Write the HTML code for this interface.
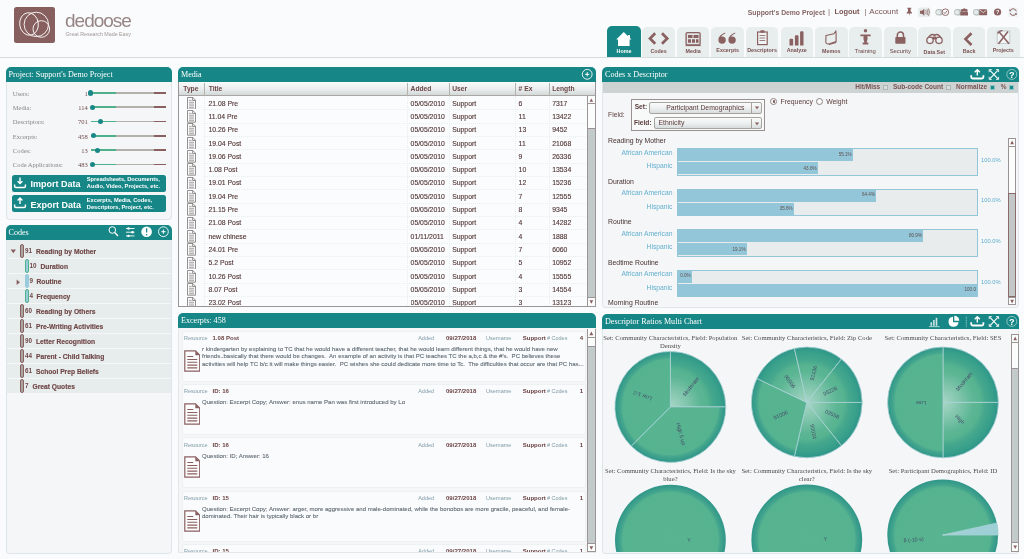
<!DOCTYPE html>
<html lang="en">
<head>
<meta charset="utf-8">
<title>Dedoose</title>
<style>
*{box-sizing:border-box;margin:0;padding:0}
html,body{width:1024px;height:559px;overflow:hidden}
body{background:#fafbfc;font-family:"Liberation Sans",sans-serif;position:relative;color:#6b4444}
.abs,.abs-all>*{position:absolute}
.serif{font-family:"Liberation Serif",serif}
.nw{white-space:nowrap}
/* header */
#logo{left:14px;top:7px;width:41px;height:36px;background:#885f5f;border-radius:2.5px}
#brand{left:65px;top:9.5px;font-size:19px;letter-spacing:-1px;color:#978585;line-height:22px;white-space:nowrap}
#tag{left:65.5px;top:30.5px;font-size:5.3px;color:#a39595;line-height:7px;white-space:nowrap}
#hline{left:0;top:56.5px;width:1024px;height:1px;background:#d6dbdb}
.toptxt{top:6px;line-height:12px;white-space:nowrap;color:#7a5454}
/* tabs */
.tab{top:27px;width:32.5px;height:30px;background:#e8eded;border-radius:5px 5px 0 0}
.tab.on{top:26px;height:31px;width:34px;background:#178686}
.tab span{position:absolute;left:-10px;right:-10px;top:19.9px;text-align:center;font-size:5.35px;font-weight:bold;color:#7a5252;line-height:8px;white-space:nowrap}
.tab.on span{color:#fff;top:21.1px}
.tab svg{position:absolute;left:0;top:0}
/* panels */
.ph{height:15px;background:#178686;border-radius:5px 5px 0 0;color:#fff;font-family:"Liberation Serif",serif;font-size:8.100px;line-height:15px;padding-left:3px;white-space:nowrap}
.pb{background:#f4f6f7;border:1px solid #dfe6e8;border-top:0;border-radius:0 0 4px 4px}
</style>
</head>
<body>
<div id="root" style="position:absolute;left:0;top:0;width:1024px;height:559px;will-change:transform">
<!-- ===== HEADER ===== -->
<div id="logo" class="abs">
<svg width="41" height="36" viewBox="0 0 41 36"><g fill="none" stroke="#fff" stroke-width="0.9"><ellipse cx="15" cy="17" rx="9.3" ry="11.3" transform="rotate(-8 15 17)"/><circle cx="22.3" cy="17.4" r="12.2"/><circle cx="27.3" cy="22" r="8.3"/></g></svg>
</div>
<div id="brand" class="abs">dedoose</div>
<div id="tag" class="abs">Great Research Made Easy</div>
<div id="hline" class="abs"></div>
<!-- ===== TOP RIGHT ===== -->
<div class="abs toptxt" style="left:747.8px;font-size:6.8px;font-weight:bold;top:6.5px;color:#856565">Support's Demo Project</div>
<div class="abs toptxt" style="left:828px;font-size:8px;top:5.5px;color:#8a6a6a">|</div>
<div class="abs toptxt" style="left:834.5px;font-size:7.4px;font-weight:bold;top:5.5px">Logout</div>
<div class="abs toptxt" style="left:864.5px;font-size:8px;top:5.5px;color:#8a6a6a">|</div>
<div class="abs toptxt" style="left:869.3px;font-size:8px;top:5.5px;color:#7a5555">Account</div>
<svg class="abs" style="left:900px;top:4px" width="124" height="16" viewBox="900 4 124 16">
 <g fill="#8a6060" stroke="none">
  <!-- pin -->
  <path d="M907.3 7.8h4v1h-.7v2.4l1.4 1.5v.8h-2.4l-.3 3-.3-3h-2.4v-.8l1.4-1.5V8.800h-.7z"/>
  <!-- speaker -->
  <rect x="918.2" y="7.5" width="12.2" height="9.5" rx="1.5" fill="#e6ecec"/>
  <path d="M920 10.700h2l2.300-2v7l-2.300-2h-2z"/>
  <path d="M925.600 10.200q1.200 2 0 4M927 9.300q1.800 2.900 0 5.800M928.400 8.600q2.200 3.600 0 7.200" fill="none" stroke="#8a6060" stroke-width=".7"/>
  <!-- toggle+check -->
  <rect x="935.400" y="9" width="8" height="6.400" rx="3.200" fill="#b9c0c0"/><circle cx="938.500" cy="12.200" r="2.300" fill="#e3e8e8"/>
  <circle cx="945.400" cy="12.200" r="3.300" fill="#fafbfc" stroke="#8a6060" stroke-width=".9"/><path d="M943.800 12.200l1.200 1.300 2.200-2.700" fill="none" stroke="#8a6060" stroke-width=".9"/>
  <!-- toggle+group -->
  <rect x="954" y="9" width="8" height="6.400" rx="3.200" fill="#b9c0c0"/><circle cx="957.100" cy="12.200" r="2.300" fill="#e3e8e8"/>
  <path d="M960.300 15.400v-2.600q0-1.400 1.400-1.400h4.800q1.500 0 1.500 1.400v2.600z"/><circle cx="962.300" cy="10.400" r="1.300"/><circle cx="964.300" cy="9.700" r="1.500"/><circle cx="966.300" cy="10.400" r="1.300"/>
  <!-- toggle+mail -->
  <rect x="973" y="9" width="8" height="6.400" rx="3.200" fill="#b9c0c0"/><circle cx="976.100" cy="12.200" r="2.300" fill="#e3e8e8"/>
  <rect x="979.300" y="9.300" width="7.800" height="6" rx=".6"/><path d="M979.800 9.900l3.400 2.800 3.400-2.800" fill="none" stroke="#f4f6f6" stroke-width=".7"/>
  <!-- help -->
  <circle cx="997.600" cy="12" r="3.600"/>
  <!-- refresh -->
  <rect x="1008.500" y="7.500" width="9.500" height="9.500" rx="1.500" fill="#eef2f2"/>
  <path d="M1016.300 11.300a3.300 3.300 0 0 0-6.100-.8M1010 12.900a3.300 3.300 0 0 0 6.100.8" fill="none" stroke="#8a6060" stroke-width="1"/>
  <path d="M1009.300 9.300l.3 2.100 2-.5zM1016.900 15l-.3-2.100-2 .5z"/>
 </g>
 <text x="997.600" y="14" font-size="5.500" font-weight="bold" text-anchor="middle" fill="#fafbfc" font-family="Liberation Sans, sans-serif">?</text>
</svg>
<!-- ===== NAV TABS ===== -->
<div class="abs tab on" style="left:607px"><svg width="34" height="31" viewBox="0 0 34 31"><path d="M16.800 6L9.200 13.400h1.800V20h11.600v-6.600h1.800L23 12V9h-2v1.200z" fill="#fff"/></svg><span>Home</span></div>
<div class="abs tab" style="left:642.3px"><svg width="33" height="30" viewBox="0 0 33 30"><path d="M13.200 6.300L8 11.500l5.200 5.200M20 6.300l5.200 5.200-5.200 5.200" fill="none" stroke="#8a6060" stroke-width="2.700"/></svg><span>Codes</span></div>
<div class="abs tab" style="left:676.900px"><svg width="33" height="30" viewBox="0 0 33 30"><rect x="9.100" y="5.600" width="14" height="12.400" rx="1.200" fill="#dfe5e5" stroke="#8a6060" stroke-width="1.300"/><path d="M11 8h4.500v3H11zM16.500 8H21.500v3H16.500zM11 12.300h3v3.500h-3zM15 12.300h3v3.500h-3zM19 12.300h2.500v3.500H19z" fill="#8a6060"/><path d="M8.500 18.600h15.200" stroke="#8a6060" stroke-width="1"/></svg><span>Media</span></div>
<div class="abs tab" style="left:711.400px"><svg width="33" height="30" viewBox="0 0 33 30"><path d="M14.200 5.500q-6.800 2.600-6.800 7.600a3.700 3.700 0 1 0 3.700-3.700q-.6 0-1.100.2q1-2 4.200-3.200zM24.200 5.500q-6.800 2.600-6.800 7.600a3.700 3.700 0 1 0 3.700-3.700q-.6 0-1.100.2q1-2 4.200-3.200z" fill="#8a6060"/></svg><span style="top:18.9px">Excerpts</span></div>
<div class="abs tab" style="left:745.800px"><svg width="33" height="30" viewBox="0 0 33 30"><rect x="11.600" y="5" width="9.600" height="12.600" fill="#f1f4f4" stroke="#8a6060" stroke-width="1.200"/><rect x="14.300" y="3.200" width="4.200" height="2.600" rx=".8" fill="#8a6060"/><path d="M13.500 8.500h5.800M13.500 11h5.800M13.500 13.500h5.800" stroke="#9a8080" stroke-width="1"/></svg><span style="top:18.9px">Descriptors</span></div>
<div class="abs tab" style="left:780.500px"><svg width="33" height="30" viewBox="0 0 33 30"><path d="M8.500 18.600v-5.800q0-1 1-1h1.600q1 0 1 1v5.800zM13.900 18.600V9.200q0-1 1-1h1.600q1 0 1 1v9.400zM19.100 18.600V5.200q0-1 1-1h1.400q1 0 1 1v13.400z" fill="#8a6060"/></svg><span style="top:18.9px">Analyze</span></div>
<div class="abs tab" style="left:815px"><svg width="33" height="30" viewBox="0 0 33 30"><path d="M11 8.500l7.800-1.700 2-2.600.3 2.100v8.300l-7.300 2.300q-2.800.5-3-2.200z" fill="none" stroke="#8a6060" stroke-width="1.100"/><path d="M13.600 16.900l7.600-2.300v1.500l-7 2z" fill="#8a6060"/></svg><span style="top:20.2px">Memos</span></div>
<div class="abs tab" style="left:849px"><svg width="33" height="30" viewBox="0 0 33 30"><circle cx="16.500" cy="3.800" r="1.700" fill="#8a6060"/><path d="M11.400 7.400h10.200v1.800h-3.300l.3 2.600-1 3.600h1.700v2.100h-5.600v-2.100h1.700l-1-3.600.3-2.600h-3.300z" fill="#8a6060"/></svg><span style="top:19.5px;font-weight:normal;font-size:5.870px;color:#6a4444">Training</span></div>
<div class="abs tab" style="left:884px"><svg width="33" height="30" viewBox="0 0 33 30"><path d="M13.300 10.500V8.200a3.100 3.100 0 0 1 6.200 0v2.300" fill="none" stroke="#8a6060" stroke-width="1.500"/><rect x="11.300" y="10" width="10.200" height="6.800" rx=".8" fill="#8a6060"/></svg><span style="top:19.5px;font-weight:normal;font-size:5.870px;color:#6a4444">Security</span></div>
<div class="abs tab" style="left:918px"><svg width="33" height="30" viewBox="0 0 33 30"><path d="M10.300 11.500q1.400-4 4.500-4 1.800 0 1.800 1.500h0q0-1.500 1.800-1.500 3.100 0 4.500 4" fill="none" stroke="#8a6060" stroke-width="1.500"/><circle cx="12" cy="13.300" r="3.200" fill="#eef2f2" stroke="#8a6060" stroke-width="1.300"/><circle cx="21" cy="13.300" r="3.200" fill="#eef2f2" stroke="#8a6060" stroke-width="1.300"/><rect x="14.800" y="9.500" width="3.400" height="3" fill="#8a6060"/></svg><span style="top:20.6px">Data Set</span></div>
<div class="abs tab" style="left:952.800px"><svg width="33" height="30" viewBox="0 0 33 30"><path d="M18.500 6.200l-6 5.900 6 5.900" fill="none" stroke="#8a6060" stroke-width="2.600"/></svg><span style="top:20.4px">Back</span></div>
<div class="abs tab" style="left:987px"><svg width="33" height="30" viewBox="0 0 33 30"><rect x="10.200" y="4" width="12.600" height="12.600" fill="#f3f6f6" stroke="#b9c2c2" stroke-width=".8"/><path d="M11.500 16.800L21 4.500M12 4.800l10 12" stroke="#8a6060" stroke-width="1.500" fill="none"/><path d="M10.500 6.500q2.500-3.500 5-2.800" stroke="#8a6060" stroke-width="1.300" fill="none"/></svg><span style="top:18.9px">Projects</span></div>
<!-- ===== LEFT: PROJECT PANEL ===== -->
<div class="abs ph" style="left:5.5px;top:67px;width:166.500px">Project: Support's Demo Project</div>
<div class="abs pb" style="left:5.5px;top:82px;width:166.500px;height:137.500px"></div>
<div class="abs serif nw" style="left:12.800px;top:87.7px;font-size:6.500px;line-height:11px;color:#828888">Users:</div>
<div class="abs serif nw" style="left:60px;width:27.800px;text-align:right;top:87.7px;font-size:6.500px;line-height:11px;color:#6e4a4a">1</div>
<div class="abs" style="left:90.500px;top:92.2px;width:75.500px;height:1.600px;background:linear-gradient(90deg,#4fb08c 0,#4fb08c 34%,#b3b0aa 34%,#b3b0aa 84%,#8a5f5f 84%)"></div>
<div class="abs" style="left:88.0px;top:90.4px;width:5.200px;height:5.200px;border-radius:50%;background:#1a8787"></div>
<div class="abs serif nw" style="left:12.800px;top:101.9px;font-size:6.500px;line-height:11px;color:#828888">Media:</div>
<div class="abs serif nw" style="left:60px;width:27.800px;text-align:right;top:101.9px;font-size:6.500px;line-height:11px;color:#6e4a4a">114</div>
<div class="abs" style="left:90.500px;top:106.4px;width:75.500px;height:1.600px;background:linear-gradient(90deg,#4fb08c 0,#4fb08c 34%,#b3b0aa 34%,#b3b0aa 84%,#8a5f5f 84%)"></div>
<div class="abs" style="left:90.2px;top:104.6px;width:5.200px;height:5.200px;border-radius:50%;background:#1a8787"></div>
<div class="abs serif nw" style="left:12.800px;top:116.1px;font-size:6.500px;line-height:11px;color:#828888">Descriptors:</div>
<div class="abs serif nw" style="left:60px;width:27.800px;text-align:right;top:116.1px;font-size:6.500px;line-height:11px;color:#6e4a4a">701</div>
<div class="abs" style="left:90.500px;top:120.6px;width:75.500px;height:1.600px;background:linear-gradient(90deg,#4fb08c 0,#4fb08c 34%,#b3b0aa 34%,#b3b0aa 84%,#8a5f5f 84%)"></div>
<div class="abs" style="left:98.0px;top:118.8px;width:5.200px;height:5.200px;border-radius:50%;background:#1a8787"></div>
<div class="abs serif nw" style="left:12.800px;top:130.5px;font-size:6.500px;line-height:11px;color:#828888">Excerpts:</div>
<div class="abs serif nw" style="left:60px;width:27.800px;text-align:right;top:130.5px;font-size:6.500px;line-height:11px;color:#6e4a4a">458</div>
<div class="abs" style="left:90.500px;top:135.0px;width:75.500px;height:1.600px;background:linear-gradient(90deg,#4fb08c 0,#4fb08c 34%,#b3b0aa 34%,#b3b0aa 84%,#8a5f5f 84%)"></div>
<div class="abs" style="left:90.9px;top:133.2px;width:5.200px;height:5.200px;border-radius:50%;background:#1a8787"></div>
<div class="abs serif nw" style="left:12.800px;top:144.9px;font-size:6.500px;line-height:11px;color:#828888">Codes:</div>
<div class="abs serif nw" style="left:60px;width:27.800px;text-align:right;top:144.9px;font-size:6.500px;line-height:11px;color:#6e4a4a">13</div>
<div class="abs" style="left:90.500px;top:149.4px;width:75.500px;height:1.600px;background:linear-gradient(90deg,#4fb08c 0,#4fb08c 34%,#b3b0aa 34%,#b3b0aa 84%,#8a5f5f 84%)"></div>
<div class="abs" style="left:95.3px;top:147.6px;width:5.200px;height:5.200px;border-radius:50%;background:#1a8787"></div>
<div class="abs serif nw" style="left:12.800px;top:159.3px;font-size:6.500px;line-height:11px;color:#828888">Code Applications:</div>
<div class="abs serif nw" style="left:60px;width:27.800px;text-align:right;top:159.3px;font-size:6.500px;line-height:11px;color:#6e4a4a">483</div>
<div class="abs" style="left:90.500px;top:163.8px;width:75.500px;height:1.600px;background:linear-gradient(90deg,#4fb08c 0,#4fb08c 34%,#b3b0aa 34%,#b3b0aa 84%,#8a5f5f 84%)"></div>
<div class="abs" style="left:89.7px;top:162.0px;width:5.200px;height:5.200px;border-radius:50%;background:#1a8787"></div>
<div class="abs" style="left:12px;top:174.5px;width:154px;height:17.300px;background:#178686;border-radius:2.500px;color:#fff">
<svg class="abs" style="left:0;top:0" width="30" height="17" viewBox="0 0 30 17"><path d="M8 2.500v6M5.600 6.200L8 8.600l2.400-2.400" fill="none" stroke="#fff" stroke-width="1.400"/><path d="M2.600 9.500v1.800q0 1.200 1.200 1.200h8.400q1.200 0 1.200-1.200V9.500" fill="none" stroke="#fff" stroke-width="1.500"/></svg>
<div class="abs nw" style="left:18.600px;top:3.900px;font-size:9px;font-weight:bold;line-height:12px">Import Data</div>
<div class="abs nw" style="left:74.800px;top:1.600px;font-size:5.690px;font-weight:bold;line-height:7.200px">Spreadsheets, Documents,<br>Audio, Video, Projects, etc.</div></div>
<div class="abs" style="left:12px;top:195px;width:154px;height:17.300px;background:#178686;border-radius:2.500px;color:#fff">
<svg class="abs" style="left:0;top:0" width="30" height="17" viewBox="0 0 30 17"><path d="M8 9v-6M5.600 5.400L8 3l2.400 2.400" fill="none" stroke="#fff" stroke-width="1.400"/><path d="M2.600 9.500v1.800q0 1.200 1.200 1.200h8.400q1.200 0 1.200-1.200V9.500" fill="none" stroke="#fff" stroke-width="1.500"/></svg>
<div class="abs nw" style="left:18.600px;top:3.900px;font-size:9px;font-weight:bold;line-height:12px">Export Data</div>
<div class="abs nw" style="left:74.800px;top:1.600px;font-size:5.690px;font-weight:bold;line-height:7.200px">Excerpts, Media, Codes,<br>Descriptors, Project, etc.</div></div>
<!-- ===== LEFT: CODES PANEL ===== -->
<div class="abs ph" style="left:5.5px;top:224.900px;width:166.500px">Codes</div>
<div class="abs pb" style="left:5.5px;top:239.900px;width:166.500px;height:313.800px"></div>
<svg class="abs" style="left:105px;top:224.900px" width="67" height="15" viewBox="105 225.500 67 15"><g fill="none" stroke="#fff">
<circle cx="112.300" cy="230.500" r="3.300" stroke-width="1"/><path d="M114.700 233l3.300 3.400" stroke-width="1.400"/>
<path d="M126 229h8.500M126 232.700h8.500M126 236.400h8.500" stroke-width=".9"/>
<circle cx="128.500" cy="229" r="1.200" fill="#fff" stroke="none"/><circle cx="132.500" cy="232.700" r="1.200" fill="#fff" stroke="none"/><circle cx="128.500" cy="236.400" r="1.200" fill="#fff" stroke="none"/>
<circle cx="146.600" cy="232.200" r="5.300" fill="#fff" stroke="none"/><path d="M146.600 228.800v4.200" stroke="#178686" stroke-width="1.300"/><circle cx="146.600" cy="235.200" r=".8" fill="#178686" stroke="none"/>
<circle cx="163.400" cy="232.200" r="4.900" stroke-width=".9"/><path d="M161.300 232.200h4.200M163.400 230.100v4.200" stroke-width="1"/>
</g></svg>
<div class="abs" style="left:6.500px;top:239.900px;width:164.500px;height:4.600px;background:#e7eded"></div>
<div class="abs" style="left:6.500px;top:244.0px;width:164.500px;height:14.300px;background:#e7eded"></div>
<div class="abs" style="left:20.4px;top:244.2px;width:4px;height:14px;border-radius:2px;background:#aaa5a1;border:0.8px solid #8a6060"></div>
<div class="abs nw" style="left:25.0px;top:246.6px;font-size:6.300px;font-weight:bold;line-height:8px;color:#6f4646">91</div>
<div class="abs nw" style="left:36px;top:247.6px;font-size:6.700px;font-weight:bold;line-height:8px;color:#6f4646;-webkit-text-stroke:.15px #6f4646">Reading by Mother</div>
<svg class="abs" style="left:10px;top:249.0px" width="7" height="5" viewBox="0 0 7 5"><path d="M.6.600h5.400L3.300 4.200z" fill="#8a6060"/></svg>
<div class="abs" style="left:6.500px;top:259.0px;width:164.500px;height:14.300px;background:#e7eded"></div>
<div class="abs" style="left:25px;top:259.2px;width:4px;height:14px;border-radius:2px;background:#9acbdd;border:0.8px solid #4fb08c"></div>
<div class="abs nw" style="left:29.6px;top:261.6px;font-size:6.300px;font-weight:bold;line-height:8px;color:#6f4646">10</div>
<div class="abs nw" style="left:40.5px;top:262.6px;font-size:6.700px;font-weight:bold;line-height:8px;color:#6f4646;-webkit-text-stroke:.15px #6f4646">Duration</div>
<div class="abs" style="left:6.500px;top:274.0px;width:164.500px;height:14.300px;background:#e7eded"></div>
<div class="abs" style="left:25px;top:274.2px;width:4px;height:14px;border-radius:2px;background:#9acbdd;border:0.8px solid #9acbdd"></div>
<div class="abs nw" style="left:29.6px;top:276.6px;font-size:6.300px;font-weight:bold;line-height:8px;color:#6f4646">9</div>
<div class="abs nw" style="left:36.5px;top:277.6px;font-size:6.700px;font-weight:bold;line-height:8px;color:#6f4646;-webkit-text-stroke:.15px #6f4646">Routine</div>
<svg class="abs" style="left:15.500px;top:278.5px" width="5" height="7" viewBox="0 0 5 7"><path d="M.6.600v5.400L4 3.300z" fill="#8a6060"/></svg>
<div class="abs" style="left:6.500px;top:289.0px;width:164.500px;height:14.300px;background:#e7eded"></div>
<div class="abs" style="left:25px;top:289.2px;width:4px;height:14px;border-radius:2px;background:#9acbdd;border:0.8px solid #4fb08c"></div>
<div class="abs nw" style="left:29.6px;top:291.6px;font-size:6.300px;font-weight:bold;line-height:8px;color:#6f4646">4</div>
<div class="abs nw" style="left:36.5px;top:292.6px;font-size:6.700px;font-weight:bold;line-height:8px;color:#6f4646;-webkit-text-stroke:.15px #6f4646">Frequency</div>
<div class="abs" style="left:6.500px;top:304.0px;width:164.500px;height:14.300px;background:#e7eded"></div>
<div class="abs" style="left:20.4px;top:304.2px;width:4px;height:14px;border-radius:2px;background:#aaa5a1;border:0.8px solid #8a6060"></div>
<div class="abs nw" style="left:25.0px;top:306.6px;font-size:6.300px;font-weight:bold;line-height:8px;color:#6f4646">60</div>
<div class="abs nw" style="left:36px;top:307.6px;font-size:6.700px;font-weight:bold;line-height:8px;color:#6f4646;-webkit-text-stroke:.15px #6f4646">Reading by Others</div>
<div class="abs" style="left:6.500px;top:319.0px;width:164.500px;height:14.300px;background:#e7eded"></div>
<div class="abs" style="left:20.4px;top:319.2px;width:4px;height:14px;border-radius:2px;background:#aaa5a1;border:0.8px solid #8a6060"></div>
<div class="abs nw" style="left:25.0px;top:321.6px;font-size:6.300px;font-weight:bold;line-height:8px;color:#6f4646">61</div>
<div class="abs nw" style="left:36px;top:322.6px;font-size:6.700px;font-weight:bold;line-height:8px;color:#6f4646;-webkit-text-stroke:.15px #6f4646">Pre-Writing Activities</div>
<div class="abs" style="left:6.500px;top:334.0px;width:164.500px;height:14.300px;background:#e7eded"></div>
<div class="abs" style="left:20.4px;top:334.2px;width:4px;height:14px;border-radius:2px;background:#aaa5a1;border:0.8px solid #8a6060"></div>
<div class="abs nw" style="left:25.0px;top:336.6px;font-size:6.300px;font-weight:bold;line-height:8px;color:#6f4646">90</div>
<div class="abs nw" style="left:36px;top:337.6px;font-size:6.700px;font-weight:bold;line-height:8px;color:#6f4646;-webkit-text-stroke:.15px #6f4646">Letter Recognition</div>
<div class="abs" style="left:6.500px;top:349.0px;width:164.500px;height:14.300px;background:#e7eded"></div>
<div class="abs" style="left:20.4px;top:349.2px;width:4px;height:14px;border-radius:2px;background:#aaa5a1;border:0.8px solid #8a6060"></div>
<div class="abs nw" style="left:25.0px;top:351.6px;font-size:6.300px;font-weight:bold;line-height:8px;color:#6f4646">44</div>
<div class="abs nw" style="left:36px;top:352.6px;font-size:6.700px;font-weight:bold;line-height:8px;color:#6f4646;-webkit-text-stroke:.15px #6f4646">Parent - Child Talking</div>
<div class="abs" style="left:6.500px;top:364.0px;width:164.500px;height:14.300px;background:#e7eded"></div>
<div class="abs" style="left:20.4px;top:364.2px;width:4px;height:14px;border-radius:2px;background:#aaa5a1;border:0.8px solid #8a6060"></div>
<div class="abs nw" style="left:25.0px;top:366.6px;font-size:6.300px;font-weight:bold;line-height:8px;color:#6f4646">61</div>
<div class="abs nw" style="left:36px;top:367.6px;font-size:6.700px;font-weight:bold;line-height:8px;color:#6f4646;-webkit-text-stroke:.15px #6f4646">School Prep Beliefs</div>
<div class="abs" style="left:6.500px;top:379.0px;width:164.500px;height:14.300px;background:#e7eded"></div>
<div class="abs" style="left:20.4px;top:379.2px;width:4px;height:14px;border-radius:2px;background:#aaa5a1;border:0.8px solid #8a6060"></div>
<div class="abs nw" style="left:25.0px;top:381.6px;font-size:6.300px;font-weight:bold;line-height:8px;color:#6f4646">7</div>
<div class="abs nw" style="left:32.5px;top:382.6px;font-size:6.700px;font-weight:bold;line-height:8px;color:#6f4646;-webkit-text-stroke:.15px #6f4646">Great Quotes</div>
<!-- ===== MEDIA PANEL ===== -->
<div class="abs ph" style="left:178px;top:67px;width:417.600px">Media</div>
<svg class="abs" style="left:580px;top:67px" width="15" height="15" viewBox="580 67 15 15"><circle cx="587.200" cy="74.300" r="4.900" fill="none" stroke="#fff" stroke-width=".9"/><path d="M585.100 74.300h4.200M587.200 72.200v4.200" stroke="#fff" stroke-width="1"/></svg>
<div class="abs" style="left:178px;top:82px;width:417.600px;height:225px;background:#fbfcfd;border:1px solid #9b9494;border-top:0"></div>
<div class="abs" style="left:179px;top:82.500px;width:415.600px;height:13px;background:linear-gradient(#f6f8f8,#eceff0 45%,#d3d9d9);border-bottom:1px solid #a9a6a3"></div>
<div class="abs nw" style="left:183.3px;top:84.600px;font-size:6.700px;font-weight:bold;line-height:8px;color:#6b4545">Type</div>
<div class="abs nw" style="left:208.7px;top:84.600px;font-size:6.700px;font-weight:bold;line-height:8px;color:#6b4545">Title</div>
<div class="abs" style="left:204.4px;top:82.500px;width:1px;height:13px;background:#b5b2ae"></div>
<div class="abs nw" style="left:410.6px;top:84.600px;font-size:6.700px;font-weight:bold;line-height:8px;color:#6b4545">Added</div>
<div class="abs" style="left:407.3px;top:82.500px;width:1px;height:13px;background:#b5b2ae"></div>
<div class="abs nw" style="left:452.2px;top:84.600px;font-size:6.700px;font-weight:bold;line-height:8px;color:#6b4545">User</div>
<div class="abs" style="left:448.5px;top:82.500px;width:1px;height:13px;background:#b5b2ae"></div>
<div class="abs nw" style="left:518.6px;top:84.600px;font-size:6.700px;font-weight:bold;line-height:8px;color:#6b4545"># Ex</div>
<div class="abs" style="left:515.2px;top:82.500px;width:1px;height:13px;background:#b5b2ae"></div>
<div class="abs nw" style="left:552.2px;top:84.600px;font-size:6.700px;font-weight:bold;line-height:8px;color:#6b4545">Length</div>
<div class="abs" style="left:549.2px;top:82.500px;width:1px;height:13px;background:#b5b2ae"></div>
<svg class="abs" style="left:187.300px;top:96.8px" width="9" height="12.7" viewBox="0 0 9 12.7"><path d="M.5.500h5.300l2.700 2.700v9h-8z" fill="#fbfcfd" stroke="#7b7474" stroke-width=".8"/><path d="M5.600.500v3h3" fill="none" stroke="#7b7474" stroke-width=".8"/><path d="M2 3.400h2.600M2 5.300h5M2 7.100h5M2 8.900h5M2 10.700h5" stroke="#8a8585" stroke-width=".75"/></svg>
<div class="abs nw" style="left:208.500px;top:99.5px;font-size:6.850px;line-height:8px;color:#523535;-webkit-text-stroke:.12px #523535">21.08 Pre</div>
<div class="abs nw" style="left:410.600px;top:99.5px;font-size:6.850px;line-height:8px;color:#523535;-webkit-text-stroke:.12px #523535">05/05/2010</div>
<div class="abs nw" style="left:452.200px;top:99.5px;font-size:6.850px;line-height:8px;color:#523535;-webkit-text-stroke:.12px #523535">Support</div>
<div class="abs nw" style="left:518.600px;top:99.5px;font-size:6.850px;line-height:8px;color:#523535;-webkit-text-stroke:.12px #523535">6</div>
<div class="abs nw" style="left:552.200px;top:99.5px;font-size:6.850px;line-height:8px;color:#523535;-webkit-text-stroke:.12px #523535">7317</div>
<div class="abs" style="left:203px;top:109.3px;width:383px;height:0;border-top:1px dotted #eaeeee"></div>
<svg class="abs" style="left:187.300px;top:110.1px" width="9" height="12.7" viewBox="0 0 9 12.7"><path d="M.5.500h5.300l2.700 2.700v9h-8z" fill="#fbfcfd" stroke="#7b7474" stroke-width=".8"/><path d="M5.600.500v3h3" fill="none" stroke="#7b7474" stroke-width=".8"/><path d="M2 3.400h2.600M2 5.300h5M2 7.100h5M2 8.900h5M2 10.700h5" stroke="#8a8585" stroke-width=".75"/></svg>
<div class="abs nw" style="left:208.500px;top:112.8px;font-size:6.850px;line-height:8px;color:#523535;-webkit-text-stroke:.12px #523535">11.04 Pre</div>
<div class="abs nw" style="left:410.600px;top:112.8px;font-size:6.850px;line-height:8px;color:#523535;-webkit-text-stroke:.12px #523535">05/05/2010</div>
<div class="abs nw" style="left:452.200px;top:112.8px;font-size:6.850px;line-height:8px;color:#523535;-webkit-text-stroke:.12px #523535">Support</div>
<div class="abs nw" style="left:518.600px;top:112.8px;font-size:6.850px;line-height:8px;color:#523535;-webkit-text-stroke:.12px #523535">11</div>
<div class="abs nw" style="left:552.200px;top:112.8px;font-size:6.850px;line-height:8px;color:#523535;-webkit-text-stroke:.12px #523535">13422</div>
<div class="abs" style="left:203px;top:122.6px;width:383px;height:0;border-top:1px dotted #eaeeee"></div>
<svg class="abs" style="left:187.300px;top:123.4px" width="9" height="12.7" viewBox="0 0 9 12.7"><path d="M.5.500h5.300l2.700 2.700v9h-8z" fill="#fbfcfd" stroke="#7b7474" stroke-width=".8"/><path d="M5.600.500v3h3" fill="none" stroke="#7b7474" stroke-width=".8"/><path d="M2 3.400h2.600M2 5.300h5M2 7.100h5M2 8.900h5M2 10.700h5" stroke="#8a8585" stroke-width=".75"/></svg>
<div class="abs nw" style="left:208.500px;top:126.1px;font-size:6.850px;line-height:8px;color:#523535;-webkit-text-stroke:.12px #523535">10.26 Pre</div>
<div class="abs nw" style="left:410.600px;top:126.1px;font-size:6.850px;line-height:8px;color:#523535;-webkit-text-stroke:.12px #523535">05/05/2010</div>
<div class="abs nw" style="left:452.200px;top:126.1px;font-size:6.850px;line-height:8px;color:#523535;-webkit-text-stroke:.12px #523535">Support</div>
<div class="abs nw" style="left:518.600px;top:126.1px;font-size:6.850px;line-height:8px;color:#523535;-webkit-text-stroke:.12px #523535">13</div>
<div class="abs nw" style="left:552.200px;top:126.1px;font-size:6.850px;line-height:8px;color:#523535;-webkit-text-stroke:.12px #523535">9452</div>
<div class="abs" style="left:203px;top:135.9px;width:383px;height:0;border-top:1px dotted #eaeeee"></div>
<svg class="abs" style="left:187.300px;top:136.8px" width="9" height="12.7" viewBox="0 0 9 12.7"><path d="M.5.500h5.300l2.700 2.700v9h-8z" fill="#fbfcfd" stroke="#7b7474" stroke-width=".8"/><path d="M5.600.500v3h3" fill="none" stroke="#7b7474" stroke-width=".8"/><path d="M2 3.400h2.600M2 5.300h5M2 7.100h5M2 8.900h5M2 10.700h5" stroke="#8a8585" stroke-width=".75"/></svg>
<div class="abs nw" style="left:208.500px;top:139.5px;font-size:6.850px;line-height:8px;color:#523535;-webkit-text-stroke:.12px #523535">19.04 Post</div>
<div class="abs nw" style="left:410.600px;top:139.5px;font-size:6.850px;line-height:8px;color:#523535;-webkit-text-stroke:.12px #523535">05/05/2010</div>
<div class="abs nw" style="left:452.200px;top:139.5px;font-size:6.850px;line-height:8px;color:#523535;-webkit-text-stroke:.12px #523535">Support</div>
<div class="abs nw" style="left:518.600px;top:139.5px;font-size:6.850px;line-height:8px;color:#523535;-webkit-text-stroke:.12px #523535">11</div>
<div class="abs nw" style="left:552.200px;top:139.5px;font-size:6.850px;line-height:8px;color:#523535;-webkit-text-stroke:.12px #523535">21068</div>
<div class="abs" style="left:203px;top:149.3px;width:383px;height:0;border-top:1px dotted #eaeeee"></div>
<svg class="abs" style="left:187.300px;top:150.1px" width="9" height="12.7" viewBox="0 0 9 12.7"><path d="M.5.500h5.300l2.700 2.700v9h-8z" fill="#fbfcfd" stroke="#7b7474" stroke-width=".8"/><path d="M5.600.500v3h3" fill="none" stroke="#7b7474" stroke-width=".8"/><path d="M2 3.400h2.600M2 5.300h5M2 7.100h5M2 8.900h5M2 10.700h5" stroke="#8a8585" stroke-width=".75"/></svg>
<div class="abs nw" style="left:208.500px;top:152.8px;font-size:6.850px;line-height:8px;color:#523535;-webkit-text-stroke:.12px #523535">19.06 Post</div>
<div class="abs nw" style="left:410.600px;top:152.8px;font-size:6.850px;line-height:8px;color:#523535;-webkit-text-stroke:.12px #523535">05/05/2010</div>
<div class="abs nw" style="left:452.200px;top:152.8px;font-size:6.850px;line-height:8px;color:#523535;-webkit-text-stroke:.12px #523535">Support</div>
<div class="abs nw" style="left:518.600px;top:152.8px;font-size:6.850px;line-height:8px;color:#523535;-webkit-text-stroke:.12px #523535">9</div>
<div class="abs nw" style="left:552.200px;top:152.8px;font-size:6.850px;line-height:8px;color:#523535;-webkit-text-stroke:.12px #523535">26336</div>
<div class="abs" style="left:203px;top:162.6px;width:383px;height:0;border-top:1px dotted #eaeeee"></div>
<svg class="abs" style="left:187.300px;top:163.4px" width="9" height="12.7" viewBox="0 0 9 12.7"><path d="M.5.500h5.300l2.700 2.700v9h-8z" fill="#fbfcfd" stroke="#7b7474" stroke-width=".8"/><path d="M5.600.500v3h3" fill="none" stroke="#7b7474" stroke-width=".8"/><path d="M2 3.400h2.600M2 5.300h5M2 7.100h5M2 8.900h5M2 10.700h5" stroke="#8a8585" stroke-width=".75"/></svg>
<div class="abs nw" style="left:208.500px;top:166.1px;font-size:6.850px;line-height:8px;color:#523535;-webkit-text-stroke:.12px #523535">1.08 Post</div>
<div class="abs nw" style="left:410.600px;top:166.1px;font-size:6.850px;line-height:8px;color:#523535;-webkit-text-stroke:.12px #523535">05/05/2010</div>
<div class="abs nw" style="left:452.200px;top:166.1px;font-size:6.850px;line-height:8px;color:#523535;-webkit-text-stroke:.12px #523535">Support</div>
<div class="abs nw" style="left:518.600px;top:166.1px;font-size:6.850px;line-height:8px;color:#523535;-webkit-text-stroke:.12px #523535">10</div>
<div class="abs nw" style="left:552.200px;top:166.1px;font-size:6.850px;line-height:8px;color:#523535;-webkit-text-stroke:.12px #523535">13534</div>
<div class="abs" style="left:203px;top:175.9px;width:383px;height:0;border-top:1px dotted #eaeeee"></div>
<svg class="abs" style="left:187.300px;top:176.7px" width="9" height="12.7" viewBox="0 0 9 12.7"><path d="M.5.500h5.300l2.700 2.700v9h-8z" fill="#fbfcfd" stroke="#7b7474" stroke-width=".8"/><path d="M5.600.500v3h3" fill="none" stroke="#7b7474" stroke-width=".8"/><path d="M2 3.400h2.600M2 5.300h5M2 7.100h5M2 8.900h5M2 10.700h5" stroke="#8a8585" stroke-width=".75"/></svg>
<div class="abs nw" style="left:208.500px;top:179.4px;font-size:6.850px;line-height:8px;color:#523535;-webkit-text-stroke:.12px #523535">19.01 Post</div>
<div class="abs nw" style="left:410.600px;top:179.4px;font-size:6.850px;line-height:8px;color:#523535;-webkit-text-stroke:.12px #523535">05/05/2010</div>
<div class="abs nw" style="left:452.200px;top:179.4px;font-size:6.850px;line-height:8px;color:#523535;-webkit-text-stroke:.12px #523535">Support</div>
<div class="abs nw" style="left:518.600px;top:179.4px;font-size:6.850px;line-height:8px;color:#523535;-webkit-text-stroke:.12px #523535">12</div>
<div class="abs nw" style="left:552.200px;top:179.4px;font-size:6.850px;line-height:8px;color:#523535;-webkit-text-stroke:.12px #523535">15236</div>
<div class="abs" style="left:203px;top:189.2px;width:383px;height:0;border-top:1px dotted #eaeeee"></div>
<svg class="abs" style="left:187.300px;top:190.0px" width="9" height="12.7" viewBox="0 0 9 12.7"><path d="M.5.500h5.300l2.700 2.700v9h-8z" fill="#fbfcfd" stroke="#7b7474" stroke-width=".8"/><path d="M5.600.500v3h3" fill="none" stroke="#7b7474" stroke-width=".8"/><path d="M2 3.400h2.600M2 5.300h5M2 7.100h5M2 8.900h5M2 10.700h5" stroke="#8a8585" stroke-width=".75"/></svg>
<div class="abs nw" style="left:208.500px;top:192.7px;font-size:6.850px;line-height:8px;color:#523535;-webkit-text-stroke:.12px #523535">19.04 Pre</div>
<div class="abs nw" style="left:410.600px;top:192.7px;font-size:6.850px;line-height:8px;color:#523535;-webkit-text-stroke:.12px #523535">05/05/2010</div>
<div class="abs nw" style="left:452.200px;top:192.7px;font-size:6.850px;line-height:8px;color:#523535;-webkit-text-stroke:.12px #523535">Support</div>
<div class="abs nw" style="left:518.600px;top:192.7px;font-size:6.850px;line-height:8px;color:#523535;-webkit-text-stroke:.12px #523535">7</div>
<div class="abs nw" style="left:552.200px;top:192.7px;font-size:6.850px;line-height:8px;color:#523535;-webkit-text-stroke:.12px #523535">12555</div>
<div class="abs" style="left:203px;top:202.5px;width:383px;height:0;border-top:1px dotted #eaeeee"></div>
<svg class="abs" style="left:187.300px;top:203.4px" width="9" height="12.7" viewBox="0 0 9 12.7"><path d="M.5.500h5.300l2.700 2.700v9h-8z" fill="#fbfcfd" stroke="#7b7474" stroke-width=".8"/><path d="M5.600.500v3h3" fill="none" stroke="#7b7474" stroke-width=".8"/><path d="M2 3.400h2.600M2 5.300h5M2 7.100h5M2 8.900h5M2 10.700h5" stroke="#8a8585" stroke-width=".75"/></svg>
<div class="abs nw" style="left:208.500px;top:206.1px;font-size:6.850px;line-height:8px;color:#523535;-webkit-text-stroke:.12px #523535">21.15 Pre</div>
<div class="abs nw" style="left:410.600px;top:206.1px;font-size:6.850px;line-height:8px;color:#523535;-webkit-text-stroke:.12px #523535">05/05/2010</div>
<div class="abs nw" style="left:452.200px;top:206.1px;font-size:6.850px;line-height:8px;color:#523535;-webkit-text-stroke:.12px #523535">Support</div>
<div class="abs nw" style="left:518.600px;top:206.1px;font-size:6.850px;line-height:8px;color:#523535;-webkit-text-stroke:.12px #523535">8</div>
<div class="abs nw" style="left:552.200px;top:206.1px;font-size:6.850px;line-height:8px;color:#523535;-webkit-text-stroke:.12px #523535">9345</div>
<div class="abs" style="left:203px;top:215.9px;width:383px;height:0;border-top:1px dotted #eaeeee"></div>
<svg class="abs" style="left:187.300px;top:216.7px" width="9" height="12.7" viewBox="0 0 9 12.7"><path d="M.5.500h5.300l2.700 2.700v9h-8z" fill="#fbfcfd" stroke="#7b7474" stroke-width=".8"/><path d="M5.600.500v3h3" fill="none" stroke="#7b7474" stroke-width=".8"/><path d="M2 3.400h2.600M2 5.300h5M2 7.100h5M2 8.900h5M2 10.700h5" stroke="#8a8585" stroke-width=".75"/></svg>
<div class="abs nw" style="left:208.500px;top:219.4px;font-size:6.850px;line-height:8px;color:#523535;-webkit-text-stroke:.12px #523535">21.08 Post</div>
<div class="abs nw" style="left:410.600px;top:219.4px;font-size:6.850px;line-height:8px;color:#523535;-webkit-text-stroke:.12px #523535">05/05/2010</div>
<div class="abs nw" style="left:452.200px;top:219.4px;font-size:6.850px;line-height:8px;color:#523535;-webkit-text-stroke:.12px #523535">Support</div>
<div class="abs nw" style="left:518.600px;top:219.4px;font-size:6.850px;line-height:8px;color:#523535;-webkit-text-stroke:.12px #523535">4</div>
<div class="abs nw" style="left:552.200px;top:219.4px;font-size:6.850px;line-height:8px;color:#523535;-webkit-text-stroke:.12px #523535">14282</div>
<div class="abs" style="left:203px;top:229.2px;width:383px;height:0;border-top:1px dotted #eaeeee"></div>
<svg class="abs" style="left:187.300px;top:230.0px" width="9" height="12.7" viewBox="0 0 9 12.7"><path d="M.5.500h5.300l2.700 2.700v9h-8z" fill="#fbfcfd" stroke="#7b7474" stroke-width=".8"/><path d="M5.600.500v3h3" fill="none" stroke="#7b7474" stroke-width=".8"/><path d="M2 3.400h2.600M2 5.300h5M2 7.100h5M2 8.900h5M2 10.700h5" stroke="#8a8585" stroke-width=".75"/></svg>
<div class="abs nw" style="left:208.500px;top:232.7px;font-size:6.850px;line-height:8px;color:#523535;-webkit-text-stroke:.12px #523535">new chinese</div>
<div class="abs nw" style="left:410.600px;top:232.7px;font-size:6.850px;line-height:8px;color:#523535;-webkit-text-stroke:.12px #523535">01/11/2011</div>
<div class="abs nw" style="left:452.200px;top:232.7px;font-size:6.850px;line-height:8px;color:#523535;-webkit-text-stroke:.12px #523535">Support</div>
<div class="abs nw" style="left:518.600px;top:232.7px;font-size:6.850px;line-height:8px;color:#523535;-webkit-text-stroke:.12px #523535">4</div>
<div class="abs nw" style="left:552.200px;top:232.7px;font-size:6.850px;line-height:8px;color:#523535;-webkit-text-stroke:.12px #523535">1888</div>
<div class="abs" style="left:203px;top:242.5px;width:383px;height:0;border-top:1px dotted #eaeeee"></div>
<svg class="abs" style="left:187.300px;top:243.3px" width="9" height="12.7" viewBox="0 0 9 12.7"><path d="M.5.500h5.300l2.700 2.700v9h-8z" fill="#fbfcfd" stroke="#7b7474" stroke-width=".8"/><path d="M5.600.500v3h3" fill="none" stroke="#7b7474" stroke-width=".8"/><path d="M2 3.400h2.600M2 5.300h5M2 7.100h5M2 8.900h5M2 10.700h5" stroke="#8a8585" stroke-width=".75"/></svg>
<div class="abs nw" style="left:208.500px;top:246.0px;font-size:6.850px;line-height:8px;color:#523535;-webkit-text-stroke:.12px #523535">24.01 Pre</div>
<div class="abs nw" style="left:410.600px;top:246.0px;font-size:6.850px;line-height:8px;color:#523535;-webkit-text-stroke:.12px #523535">05/05/2010</div>
<div class="abs nw" style="left:452.200px;top:246.0px;font-size:6.850px;line-height:8px;color:#523535;-webkit-text-stroke:.12px #523535">Support</div>
<div class="abs nw" style="left:518.600px;top:246.0px;font-size:6.850px;line-height:8px;color:#523535;-webkit-text-stroke:.12px #523535">7</div>
<div class="abs nw" style="left:552.200px;top:246.0px;font-size:6.850px;line-height:8px;color:#523535;-webkit-text-stroke:.12px #523535">6060</div>
<div class="abs" style="left:203px;top:255.8px;width:383px;height:0;border-top:1px dotted #eaeeee"></div>
<svg class="abs" style="left:187.300px;top:256.6px" width="9" height="12.7" viewBox="0 0 9 12.7"><path d="M.5.500h5.300l2.700 2.700v9h-8z" fill="#fbfcfd" stroke="#7b7474" stroke-width=".8"/><path d="M5.600.500v3h3" fill="none" stroke="#7b7474" stroke-width=".8"/><path d="M2 3.400h2.600M2 5.300h5M2 7.100h5M2 8.900h5M2 10.700h5" stroke="#8a8585" stroke-width=".75"/></svg>
<div class="abs nw" style="left:208.500px;top:259.3px;font-size:6.850px;line-height:8px;color:#523535;-webkit-text-stroke:.12px #523535">5.2 Post</div>
<div class="abs nw" style="left:410.600px;top:259.3px;font-size:6.850px;line-height:8px;color:#523535;-webkit-text-stroke:.12px #523535">05/05/2010</div>
<div class="abs nw" style="left:452.200px;top:259.3px;font-size:6.850px;line-height:8px;color:#523535;-webkit-text-stroke:.12px #523535">Support</div>
<div class="abs nw" style="left:518.600px;top:259.3px;font-size:6.850px;line-height:8px;color:#523535;-webkit-text-stroke:.12px #523535">5</div>
<div class="abs nw" style="left:552.200px;top:259.3px;font-size:6.850px;line-height:8px;color:#523535;-webkit-text-stroke:.12px #523535">10952</div>
<div class="abs" style="left:203px;top:269.1px;width:383px;height:0;border-top:1px dotted #eaeeee"></div>
<svg class="abs" style="left:187.300px;top:270.0px" width="9" height="12.7" viewBox="0 0 9 12.7"><path d="M.5.500h5.300l2.700 2.700v9h-8z" fill="#fbfcfd" stroke="#7b7474" stroke-width=".8"/><path d="M5.600.500v3h3" fill="none" stroke="#7b7474" stroke-width=".8"/><path d="M2 3.400h2.600M2 5.300h5M2 7.100h5M2 8.900h5M2 10.700h5" stroke="#8a8585" stroke-width=".75"/></svg>
<div class="abs nw" style="left:208.500px;top:272.7px;font-size:6.850px;line-height:8px;color:#523535;-webkit-text-stroke:.12px #523535">10.26 Post</div>
<div class="abs nw" style="left:410.600px;top:272.7px;font-size:6.850px;line-height:8px;color:#523535;-webkit-text-stroke:.12px #523535">05/05/2010</div>
<div class="abs nw" style="left:452.200px;top:272.7px;font-size:6.850px;line-height:8px;color:#523535;-webkit-text-stroke:.12px #523535">Support</div>
<div class="abs nw" style="left:518.600px;top:272.7px;font-size:6.850px;line-height:8px;color:#523535;-webkit-text-stroke:.12px #523535">4</div>
<div class="abs nw" style="left:552.200px;top:272.7px;font-size:6.850px;line-height:8px;color:#523535;-webkit-text-stroke:.12px #523535">15555</div>
<div class="abs" style="left:203px;top:282.5px;width:383px;height:0;border-top:1px dotted #eaeeee"></div>
<svg class="abs" style="left:187.300px;top:283.3px" width="9" height="12.7" viewBox="0 0 9 12.7"><path d="M.5.500h5.300l2.700 2.700v9h-8z" fill="#fbfcfd" stroke="#7b7474" stroke-width=".8"/><path d="M5.600.500v3h3" fill="none" stroke="#7b7474" stroke-width=".8"/><path d="M2 3.400h2.600M2 5.300h5M2 7.100h5M2 8.900h5M2 10.700h5" stroke="#8a8585" stroke-width=".75"/></svg>
<div class="abs nw" style="left:208.500px;top:286.0px;font-size:6.850px;line-height:8px;color:#523535;-webkit-text-stroke:.12px #523535">8.07 Post</div>
<div class="abs nw" style="left:410.600px;top:286.0px;font-size:6.850px;line-height:8px;color:#523535;-webkit-text-stroke:.12px #523535">05/05/2010</div>
<div class="abs nw" style="left:452.200px;top:286.0px;font-size:6.850px;line-height:8px;color:#523535;-webkit-text-stroke:.12px #523535">Support</div>
<div class="abs nw" style="left:518.600px;top:286.0px;font-size:6.850px;line-height:8px;color:#523535;-webkit-text-stroke:.12px #523535">3</div>
<div class="abs nw" style="left:552.200px;top:286.0px;font-size:6.850px;line-height:8px;color:#523535;-webkit-text-stroke:.12px #523535">14554</div>
<div class="abs" style="left:203px;top:295.8px;width:383px;height:0;border-top:1px dotted #eaeeee"></div>
<svg class="abs" style="left:187.300px;top:296.6px" width="9" height="9.6" viewBox="0 0 9 9.6"><path d="M.5.500h5.300l2.700 2.700v9h-8z" fill="#fbfcfd" stroke="#7b7474" stroke-width=".8"/><path d="M5.600.500v3h3" fill="none" stroke="#7b7474" stroke-width=".8"/><path d="M2 3.400h2.600M2 5.300h5M2 7.100h5M2 8.900h5M2 10.700h5" stroke="#8a8585" stroke-width=".75"/></svg>
<div class="abs nw" style="left:208.500px;top:299.3px;font-size:6.850px;line-height:8px;color:#523535;-webkit-text-stroke:.12px #523535;height:7px;overflow:hidden">23.02 Post</div>
<div class="abs nw" style="left:410.600px;top:299.3px;font-size:6.850px;line-height:8px;color:#523535;-webkit-text-stroke:.12px #523535;height:7px;overflow:hidden">05/05/2010</div>
<div class="abs nw" style="left:452.200px;top:299.3px;font-size:6.850px;line-height:8px;color:#523535;-webkit-text-stroke:.12px #523535;height:7px;overflow:hidden">Support</div>
<div class="abs nw" style="left:518.600px;top:299.3px;font-size:6.850px;line-height:8px;color:#523535;-webkit-text-stroke:.12px #523535;height:7px;overflow:hidden">3</div>
<div class="abs nw" style="left:552.200px;top:299.3px;font-size:6.850px;line-height:8px;color:#523535;-webkit-text-stroke:.12px #523535;height:7px;overflow:hidden">13123</div>
<div class="abs" style="left:204.4px;top:96px;width:0;height:210px;border-left:1px dotted #e9eded"></div>
<div class="abs" style="left:407.3px;top:96px;width:0;height:210px;border-left:1px dotted #e9eded"></div>
<div class="abs" style="left:448.5px;top:96px;width:0;height:210px;border-left:1px dotted #e9eded"></div>
<div class="abs" style="left:515.2px;top:96px;width:0;height:210px;border-left:1px dotted #e9eded"></div>
<div class="abs" style="left:549.2px;top:96px;width:0;height:210px;border-left:1px dotted #e9eded"></div>
<div class="abs" style="left:587px;top:95.5px;width:8.6px;height:211.0px;background:#c3caca;border-left:1px solid #9b9494;border-right:1px solid #9b9494"></div>
<div class="abs" style="left:587px;top:95.5px;width:8.6px;height:33.9px;background:#fbfcfc;border:1px solid #9b9494;border-top:0"></div>
<div class="abs" style="left:587px;top:95.5px;width:8.6px;height:8.5px;background:#fbfcfc;border:1px solid #9b9494;border-top:0"></div>
<svg class="abs" style="left:587px;top:95.5px" width="8.6" height="8.5" viewBox="0 0 8.500 9"><path d="M2.400 6.200h3.800L4.300 2.600z" fill="#8a5f5f"/></svg>
<div class="abs" style="left:587px;top:297px;width:8.6px;height:9.5px;background:#fbfcfc;border:1px solid #9b9494"></div>
<svg class="abs" style="left:587px;top:297px" width="8.6" height="9.5" viewBox="0 0 8.500 9.500"><path d="M2.400 3.200h3.800L4.300 6.800z" fill="#8a5f5f"/></svg>
<!-- ===== EXCERPTS PANEL ===== -->
<div class="abs ph" style="left:178px;top:313px;width:417.600px">Excerpts: 458</div>
<div class="abs" style="left:178px;top:328px;width:417.600px;height:224.500px;background:#f4f6f7;border:1px solid #e2e8e8;border-top:0;overflow:hidden"></div>
<div class="abs" style="left:179px;top:328px;width:408px;height:224px;overflow:hidden">
<div class="abs" style="left:2.500px;top:2.6px;width:404px;height:51px;background:#fafbfd;border:1px solid #eef1f2;border-radius:2px"></div>
<div class="abs nw" style="left:5px;top:5.8px;font-size:5.500px;line-height:8px;color:#7f9aa6">Resource</div>
<div class="abs nw" style="left:33.500px;top:5.8px;font-size:6.050px;font-weight:bold;line-height:8px;color:#6b4242">1.08 Post</div>
<div class="abs nw" style="left:239.200px;top:5.8px;font-size:5.500px;line-height:8px;color:#7f9aa6">Added</div>
<div class="abs nw" style="left:267px;top:5.8px;font-size:6.050px;font-weight:bold;line-height:8px;color:#6b4242">09/27/2018</div>
<div class="abs nw" style="left:307px;top:5.8px;font-size:5.500px;line-height:8px;color:#7f9aa6">Username</div>
<div class="abs nw" style="left:343.700px;top:5.8px;font-size:6.050px;font-weight:bold;line-height:8px;color:#6b4242">Support</div>
<div class="abs nw" style="left:367.900px;top:5.8px;font-size:5.500px;line-height:8px;color:#7f9aa6"># Codes</div>
<div class="abs nw" style="left:400.700px;top:5.8px;font-size:6.050px;font-weight:bold;line-height:8px;color:#6b4242">4</div>
<svg class="abs" style="left:4.700px;top:21.6px" width="16.500" height="22" viewBox="0 0 16.500 22"><path d="M.8.800h10.700l4.200 4.200v16.200H.8z" fill="#fdfdfe" stroke="#8a5f5f" stroke-width="1.200"/><path d="M11.300.800v4.400h4.400z" fill="#8a5f5f"/><path d="M3.300 6.500h6M3.300 9.500h10M3.300 12.300h10M3.300 15.100h10M3.300 17.900h10" stroke="#8a5f5f" stroke-width="1.100"/></svg>
<div class="abs nw" style="left:23px;top:17.9px;font-size:6.050px;line-height:7.600px;color:#5f6b73;-webkit-text-stroke:.1px #5f6b73;white-space:pre">r kindergarten by explaining to TC that he would have a different teacher, that he would learn different things, that he would have new<br>friends..basically that there would be changes.  An example of an activity is that PC teaches TC the a,b,c &amp; the #'s.  PC believes these<br>activities will help TC b/c it will make things easier.  PC wishes she could dedicate more time to Tc.  The difficulties that occur are that PC has...</div>
<div class="abs" style="left:2.500px;top:55.9px;width:404px;height:51px;background:#fafbfd;border:1px solid #eef1f2;border-radius:2px"></div>
<div class="abs nw" style="left:5px;top:59.1px;font-size:5.500px;line-height:8px;color:#7f9aa6">Resource</div>
<div class="abs nw" style="left:33.500px;top:59.1px;font-size:6.050px;font-weight:bold;line-height:8px;color:#6b4242">ID: 16</div>
<div class="abs nw" style="left:239.200px;top:59.1px;font-size:5.500px;line-height:8px;color:#7f9aa6">Added</div>
<div class="abs nw" style="left:267px;top:59.1px;font-size:6.050px;font-weight:bold;line-height:8px;color:#6b4242">09/27/2018</div>
<div class="abs nw" style="left:307px;top:59.1px;font-size:5.500px;line-height:8px;color:#7f9aa6">Username</div>
<div class="abs nw" style="left:343.700px;top:59.1px;font-size:6.050px;font-weight:bold;line-height:8px;color:#6b4242">Support</div>
<div class="abs nw" style="left:367.900px;top:59.1px;font-size:5.500px;line-height:8px;color:#7f9aa6"># Codes</div>
<div class="abs nw" style="left:400.700px;top:59.1px;font-size:6.050px;font-weight:bold;line-height:8px;color:#6b4242">1</div>
<svg class="abs" style="left:4.700px;top:74.9px" width="16.500" height="22" viewBox="0 0 16.500 22"><path d="M.8.800h10.700l4.200 4.200v16.200H.8z" fill="#fdfdfe" stroke="#8a5f5f" stroke-width="1.200"/><path d="M11.300.800v4.400h4.400z" fill="#8a5f5f"/><path d="M3.300 6.500h6M3.300 9.500h10M3.300 12.300h10M3.300 15.100h10M3.300 17.900h10" stroke="#8a5f5f" stroke-width="1.100"/></svg>
<div class="abs nw" style="left:23px;top:71.2px;font-size:6.050px;line-height:7.600px;color:#5f6b73;-webkit-text-stroke:.1px #5f6b73;white-space:pre">Question: Excerpt Copy; Answer: enus name Pan was first introduced by Lo</div>
<div class="abs" style="left:2.500px;top:109.3px;width:404px;height:51px;background:#fafbfd;border:1px solid #eef1f2;border-radius:2px"></div>
<div class="abs nw" style="left:5px;top:112.5px;font-size:5.500px;line-height:8px;color:#7f9aa6">Resource</div>
<div class="abs nw" style="left:33.500px;top:112.5px;font-size:6.050px;font-weight:bold;line-height:8px;color:#6b4242">ID: 16</div>
<div class="abs nw" style="left:239.200px;top:112.5px;font-size:5.500px;line-height:8px;color:#7f9aa6">Added</div>
<div class="abs nw" style="left:267px;top:112.5px;font-size:6.050px;font-weight:bold;line-height:8px;color:#6b4242">09/27/2018</div>
<div class="abs nw" style="left:307px;top:112.5px;font-size:5.500px;line-height:8px;color:#7f9aa6">Username</div>
<div class="abs nw" style="left:343.700px;top:112.5px;font-size:6.050px;font-weight:bold;line-height:8px;color:#6b4242">Support</div>
<div class="abs nw" style="left:367.900px;top:112.5px;font-size:5.500px;line-height:8px;color:#7f9aa6"># Codes</div>
<div class="abs nw" style="left:400.700px;top:112.5px;font-size:6.050px;font-weight:bold;line-height:8px;color:#6b4242">1</div>
<svg class="abs" style="left:4.700px;top:128.3px" width="16.500" height="22" viewBox="0 0 16.500 22"><path d="M.8.800h10.700l4.200 4.200v16.200H.8z" fill="#fdfdfe" stroke="#8a5f5f" stroke-width="1.200"/><path d="M11.300.800v4.400h4.400z" fill="#8a5f5f"/><path d="M3.300 6.500h6M3.300 9.500h10M3.300 12.300h10M3.300 15.100h10M3.300 17.900h10" stroke="#8a5f5f" stroke-width="1.100"/></svg>
<div class="abs nw" style="left:23px;top:124.6px;font-size:6.050px;line-height:7.600px;color:#5f6b73;-webkit-text-stroke:.1px #5f6b73;white-space:pre">Question: ID; Answer: 16</div>
<div class="abs" style="left:2.500px;top:162.6px;width:404px;height:51px;background:#fafbfd;border:1px solid #eef1f2;border-radius:2px"></div>
<div class="abs nw" style="left:5px;top:165.8px;font-size:5.500px;line-height:8px;color:#7f9aa6">Resource</div>
<div class="abs nw" style="left:33.500px;top:165.8px;font-size:6.050px;font-weight:bold;line-height:8px;color:#6b4242">ID: 15</div>
<div class="abs nw" style="left:239.200px;top:165.8px;font-size:5.500px;line-height:8px;color:#7f9aa6">Added</div>
<div class="abs nw" style="left:267px;top:165.8px;font-size:6.050px;font-weight:bold;line-height:8px;color:#6b4242">09/27/2018</div>
<div class="abs nw" style="left:307px;top:165.8px;font-size:5.500px;line-height:8px;color:#7f9aa6">Username</div>
<div class="abs nw" style="left:343.700px;top:165.8px;font-size:6.050px;font-weight:bold;line-height:8px;color:#6b4242">Support</div>
<div class="abs nw" style="left:367.900px;top:165.8px;font-size:5.500px;line-height:8px;color:#7f9aa6"># Codes</div>
<div class="abs nw" style="left:400.700px;top:165.8px;font-size:6.050px;font-weight:bold;line-height:8px;color:#6b4242">1</div>
<svg class="abs" style="left:4.700px;top:181.6px" width="16.500" height="22" viewBox="0 0 16.500 22"><path d="M.8.800h10.700l4.200 4.200v16.200H.8z" fill="#fdfdfe" stroke="#8a5f5f" stroke-width="1.200"/><path d="M11.300.800v4.400h4.400z" fill="#8a5f5f"/><path d="M3.300 6.500h6M3.300 9.500h10M3.300 12.300h10M3.300 15.100h10M3.300 17.900h10" stroke="#8a5f5f" stroke-width="1.100"/></svg>
<div class="abs nw" style="left:23px;top:177.9px;font-size:6.050px;line-height:7.600px;color:#5f6b73;-webkit-text-stroke:.1px #5f6b73;white-space:pre">Question: Excerpt Copy; Answer: arger, more aggressive and male-dominated, while the bonobos are more gracile, peaceful, and female-<br>dominated. Their hair is typically black or br</div>
<div class="abs" style="left:2.500px;top:215.9px;width:404px;height:51px;background:#fafbfd;border:1px solid #eef1f2;border-radius:2px"></div>
<div class="abs nw" style="left:5px;top:219.1px;font-size:5.500px;line-height:8px;color:#7f9aa6">Resource</div>
<div class="abs nw" style="left:33.500px;top:219.1px;font-size:6.050px;font-weight:bold;line-height:8px;color:#6b4242">ID: 15</div>
<div class="abs nw" style="left:239.200px;top:219.1px;font-size:5.500px;line-height:8px;color:#7f9aa6">Added</div>
<div class="abs nw" style="left:267px;top:219.1px;font-size:6.050px;font-weight:bold;line-height:8px;color:#6b4242">09/27/2018</div>
<div class="abs nw" style="left:307px;top:219.1px;font-size:5.500px;line-height:8px;color:#7f9aa6">Username</div>
<div class="abs nw" style="left:343.700px;top:219.1px;font-size:6.050px;font-weight:bold;line-height:8px;color:#6b4242">Support</div>
<div class="abs nw" style="left:367.900px;top:219.1px;font-size:5.500px;line-height:8px;color:#7f9aa6"># Codes</div>
<div class="abs nw" style="left:400.700px;top:219.1px;font-size:6.050px;font-weight:bold;line-height:8px;color:#6b4242">1</div>
</div>
<div class="abs" style="left:587px;top:329px;width:8.6px;height:223.0px;background:#c3caca;border-left:1px solid #9b9494;border-right:1px solid #9b9494"></div>
<div class="abs" style="left:587px;top:329px;width:8.6px;height:17.5px;background:#fbfcfc;border:1px solid #9b9494;border-top:0"></div>
<div class="abs" style="left:587px;top:329px;width:8.6px;height:9px;background:#fbfcfc;border:1px solid #9b9494;border-top:0"></div>
<svg class="abs" style="left:587px;top:329px" width="8.6" height="9" viewBox="0 0 8.500 9"><path d="M2.400 6.200h3.800L4.300 2.600z" fill="#8a5f5f"/></svg>
<div class="abs" style="left:587px;top:542.5px;width:8.6px;height:9.5px;background:#fbfcfc;border:1px solid #9b9494"></div>
<svg class="abs" style="left:587px;top:542.5px" width="8.6" height="9.5" viewBox="0 0 8.500 9.500"><path d="M2.400 3.200h3.800L4.300 6.800z" fill="#8a5f5f"/></svg>
<!-- ===== CODES x DESCRIPTOR PANEL ===== -->
<div class="abs ph" style="left:602px;top:67px;width:417px">Codes x Descriptor</div>
<svg class="abs" style="left:925px;top:67px" width="95" height="15" viewBox="925 0 95 15"><g fill="none" stroke="#fff">
<path d="M977.300 8.600V2.800M974.700 5.200l2.600-2.500 2.600 2.500" stroke-width="1.400"/><path d="M971.200 8.300v1.700q0 1.500 1.500 1.500h9.200q1.500 0 1.500-1.500V8.300" stroke-width="1.800"/>
<path d="M990 3.400l7.800 8.200M997.800 3.400l-7.800 8.200" stroke-width="1.050"/><path d="M989.200 5.100V2.600h2.500M996.100 2.600h2.500v2.500M998.600 9.900v2.500h-2.500M991.700 12.400h-2.500V9.900" stroke-width=".9"/>
<circle cx="1011.800" cy="7.400" r="5" stroke-width=".8" stroke="#a9d4d4"/></g>
<text x="1011.800" y="10.700" font-size="9.200" font-weight="bold" text-anchor="middle" fill="#fff" font-family="Liberation Sans, sans-serif">?</text></svg>
<div class="abs pb" style="left:602px;top:82px;width:417px;height:226px"></div>
<div class="abs" style="left:603px;top:82px;width:415px;height:11px;background:#cdd3d3"></div>
<div class="abs nw" style="left:855.300px;top:83.300px;font-size:6.500px;font-weight:bold;line-height:8px;color:#7a5252">Hit/Miss</div>
<div class="abs nw" style="left:893px;top:83.300px;font-size:6.500px;font-weight:bold;line-height:8px;color:#7a5252">Sub-code Count</div>
<div class="abs nw" style="left:956px;top:83.300px;font-size:6.500px;font-weight:bold;line-height:8px;color:#7a5252">Normalize</div>
<div class="abs nw" style="left:1000.800px;top:83.300px;font-size:6.500px;font-weight:bold;line-height:8px;color:#7a5252">%</div>
<div class="abs" style="left:883px;top:85px;width:4.800px;height:4.800px;background:#d9dede;border:.7px solid #aeb6b6"></div>
<div class="abs" style="left:946px;top:85px;width:4.800px;height:4.800px;background:#d9dede;border:.7px solid #aeb6b6"></div>
<div class="abs" style="left:990px;top:85px;width:4.800px;height:4.800px;background:#1b8a8a;border:.7px solid #8fc4c4"></div>
<div class="abs" style="left:1009.3px;top:85px;width:4.800px;height:4.800px;background:#1b8a8a;border:.7px solid #8fc4c4"></div>
<div class="abs nw" style="left:608px;top:110.500px;font-size:6.850px;line-height:8px;color:#5c3a3a">Field:</div>
<div class="abs" style="left:631.200px;top:99px;width:134px;height:32.200px;border:1px solid #9a9090;background:#f8fafa"></div>
<div class="abs nw" style="left:634.700px;top:103px;font-size:6.850px;line-height:8px;color:#5c3a3a;font-weight:bold;font-size:6.600px">Set:</div>
<div class="abs nw" style="left:634px;top:118.800px;font-size:6.850px;line-height:8px;color:#5c3a3a;font-weight:bold;font-size:6.600px">Field:</div>
<div class="abs" style="left:649px;top:101.600px;width:112.700px;height:12.200px;background:linear-gradient(#fafbfb,#eef1f1 50%,#d7dcdc);border:1px solid #a9a3a0;border-radius:2px"></div>
<div class="abs" style="left:654px;top:117.200px;width:107.700px;height:11.800px;background:linear-gradient(#fafbfb,#eef1f1 50%,#d7dcdc);border:1px solid #a9a3a0;border-radius:2px"></div>
<div class="abs nw" style="left:649px;width:112.700px;text-align:center;top:103.900px;font-size:6.850px;line-height:8px;color:#5c3a3a">Participant Demographics</div>
<div class="abs nw" style="left:658.500px;top:119.100px;font-size:6.850px;line-height:8px;color:#5c3a3a">Ethnicity</div>
<div class="abs" style="left:751.200px;top:103px;width:1px;height:9.500px;background:#a9a3a0"></div>
<svg class="abs" style="left:752px;top:102px" width="10" height="11" viewBox="0 0 10 11"><path d="M2.800 4.500h4.400L5 7.300z" fill="#8a5f5f"/></svg>
<div class="abs" style="left:751.200px;top:118.6px;width:1px;height:9.500px;background:#a9a3a0"></div>
<svg class="abs" style="left:752px;top:117.6px" width="10" height="11" viewBox="0 0 10 11"><path d="M2.800 4.500h4.400L5 7.300z" fill="#8a5f5f"/></svg>
<div class="abs" style="left:770.300px;top:97.800px;width:7px;height:7px;border-radius:50%;border:.9px solid #8d8080;background:#fbfcfc"></div>
<div class="abs" style="left:772.500px;top:100px;width:2.600px;height:2.600px;border-radius:50%;background:#7a5252"></div>
<div class="abs nw" style="left:780.500px;top:97.800px;font-size:6.850px;line-height:8px;color:#5c3a3a">Frequency</div>
<div class="abs" style="left:816.400px;top:97.800px;width:7px;height:7px;border-radius:50%;border:.9px solid #8d8080;background:#fbfcfc"></div>
<div class="abs nw" style="left:826.200px;top:97.800px;font-size:6.850px;line-height:8px;color:#5c3a3a">Weight</div>
<div class="abs" style="left:603px;top:135px;width:405px;height:172.500px;overflow:hidden">
<div class="abs nw" style="left:5px;top:1.9px;font-size:6.850px;line-height:8px;color:#5c3a3a;color:#473030">Reading by Mother</div>
<div class="abs" style="left:74px;top:13.0px;width:301px;height:27.600px;background:#e8ecec;border:1px solid #93c6d8"></div>
<div class="abs" style="left:74px;top:13.0px;width:175.7px;height:13.200px;background:#93c6d8"></div>
<div class="abs" style="left:74px;top:27.0px;width:140.6px;height:12.300px;background:#93c6d8"></div>
<div class="abs nw" style="left:-3px;width:72.500px;top:13.6px;font-size:6.750px;line-height:8px;color:#64b0cf;text-align:right">African American</div>
<div class="abs nw" style="left:-3px;width:72.500px;top:27.0px;font-size:6.750px;line-height:8px;color:#64b0cf;text-align:right">Hispanic</div>
<div class="abs nw" style="left:378px;top:20.8px;font-size:5.750px;line-height:8px;color:#5fadcc">100.0%</div>
<div class="abs nw" style="left:219.7px;width:29px;top:16.5px;font-size:4.600px;line-height:6px;color:#5d5050;text-align:right">55.1%</div>
<div class="abs nw" style="left:184.6px;width:29px;top:30.5px;font-size:4.600px;line-height:6px;color:#5d5050;text-align:right">43.6%</div>
<div class="abs nw" style="left:5px;top:42.5px;font-size:6.850px;line-height:8px;color:#5c3a3a;color:#473030">Duration</div>
<div class="abs" style="left:74px;top:53.6px;width:301px;height:27.600px;background:#e8ecec;border:1px solid #93c6d8"></div>
<div class="abs" style="left:74px;top:53.6px;width:199.0px;height:13.200px;background:#93c6d8"></div>
<div class="abs" style="left:74px;top:67.6px;width:116.7px;height:12.300px;background:#93c6d8"></div>
<div class="abs nw" style="left:-3px;width:72.500px;top:54.2px;font-size:6.750px;line-height:8px;color:#64b0cf;text-align:right">African American</div>
<div class="abs nw" style="left:-3px;width:72.500px;top:67.6px;font-size:6.750px;line-height:8px;color:#64b0cf;text-align:right">Hispanic</div>
<div class="abs nw" style="left:378px;top:61.4px;font-size:5.750px;line-height:8px;color:#5fadcc">100.0%</div>
<div class="abs nw" style="left:243.0px;width:29px;top:57.1px;font-size:4.600px;line-height:6px;color:#5d5050;text-align:right">64.4%</div>
<div class="abs nw" style="left:160.7px;width:29px;top:71.1px;font-size:4.600px;line-height:6px;color:#5d5050;text-align:right">35.6%</div>
<div class="abs nw" style="left:5px;top:83.0px;font-size:6.850px;line-height:8px;color:#5c3a3a;color:#473030">Routine</div>
<div class="abs" style="left:74px;top:94.2px;width:301px;height:27.600px;background:#e8ecec;border:1px solid #93c6d8"></div>
<div class="abs" style="left:74px;top:94.2px;width:246.0px;height:13.200px;background:#93c6d8"></div>
<div class="abs" style="left:74px;top:108.2px;width:69.5px;height:12.300px;background:#93c6d8"></div>
<div class="abs nw" style="left:-3px;width:72.500px;top:94.8px;font-size:6.750px;line-height:8px;color:#64b0cf;text-align:right">African American</div>
<div class="abs nw" style="left:-3px;width:72.500px;top:108.2px;font-size:6.750px;line-height:8px;color:#64b0cf;text-align:right">Hispanic</div>
<div class="abs nw" style="left:378px;top:102.0px;font-size:5.750px;line-height:8px;color:#5fadcc">100.0%</div>
<div class="abs nw" style="left:290.0px;width:29px;top:97.7px;font-size:4.600px;line-height:6px;color:#5d5050;text-align:right">80.9%</div>
<div class="abs nw" style="left:113.5px;width:29px;top:111.7px;font-size:4.600px;line-height:6px;color:#5d5050;text-align:right">19.1%</div>
<div class="abs nw" style="left:5px;top:123.5px;font-size:6.850px;line-height:8px;color:#5c3a3a;color:#473030">Bedtime Routine</div>
<div class="abs" style="left:74px;top:134.8px;width:301px;height:27.600px;background:#e8ecec;border:1px solid #93c6d8"></div>
<div class="abs" style="left:74px;top:134.8px;width:14.7px;height:13.200px;background:#93c6d8"></div>
<div class="abs" style="left:74px;top:148.8px;width:300.0px;height:12.300px;background:#93c6d8"></div>
<div class="abs nw" style="left:-3px;width:72.500px;top:135.4px;font-size:6.750px;line-height:8px;color:#64b0cf;text-align:right">African American</div>
<div class="abs nw" style="left:-3px;width:72.500px;top:148.8px;font-size:6.750px;line-height:8px;color:#64b0cf;text-align:right">Hispanic</div>
<div class="abs nw" style="left:378px;top:142.6px;font-size:5.750px;line-height:8px;color:#5fadcc">100.0%</div>
<div class="abs nw" style="left:58.7px;width:29px;top:138.3px;font-size:4.600px;line-height:6px;color:#5d5050;text-align:right">0.0%</div>
<div class="abs nw" style="left:344.0px;width:29px;top:152.3px;font-size:4.600px;line-height:6px;color:#5d5050;text-align:right">100.0</div>
<div class="abs nw" style="left:5px;top:164.1px;font-size:6.850px;line-height:8px;color:#5c3a3a;color:#473030">Morning Routine</div>
</div>
<div class="abs" style="left:1008.3px;top:137.500px;width:8.2px;height:167.500px;background:#fbfcfc;border:1px solid #9b9494"></div>
<div class="abs" style="left:1008.3px;top:137.500px;width:8.2px;height:9px;border:1px solid #9b9494"></div>
<svg class="abs" style="left:1008.3px;top:137.500px" width="8.2" height="9" viewBox="0 0 8.200 9"><path d="M2.300 6.200h3.600L4.100 2.600z" fill="#8a5f5f"/></svg>
<div class="abs" style="left:1008.3px;top:193px;width:8.2px;height:103.500px;background:#c3c7c7;border:1px solid #8a6a6a"></div>
<div class="abs" style="left:1008.3px;top:296.500px;width:8.2px;height:8.500px;border:1px solid #9b9494"></div>
<svg class="abs" style="left:1008.3px;top:296.500px" width="8.2" height="8.500" viewBox="0 0 8.200 8.500"><path d="M2.300 2.800h3.600L4.100 6.400z" fill="#8a5f5f"/></svg>
<!-- ===== DESCRIPTOR RATIOS PANEL ===== -->
<div class="abs ph" style="left:602px;top:314px;width:417px">Descriptor Ratios Multi Chart</div>
<svg class="abs" style="left:925px;top:314px" width="95" height="15" viewBox="925 0 95 15"><g fill="none" stroke="#fff">
<path d="M977.300 8.600V2.800M974.700 5.200l2.600-2.500 2.600 2.500" stroke-width="1.400"/><path d="M971.200 8.300v1.700q0 1.500 1.500 1.500h9.200q1.500 0 1.500-1.500V8.300" stroke-width="1.800"/>
<path d="M990 3.400l7.800 8.200M997.800 3.400l-7.800 8.200" stroke-width="1.050"/><path d="M989.200 5.100V2.600h2.500M996.100 2.600h2.500v2.500M998.600 9.900v2.500h-2.500M991.700 12.400h-2.500V9.900" stroke-width=".9"/>
<circle cx="1011.800" cy="7.400" r="5" stroke-width=".8" stroke="#a9d4d4"/></g>
<text x="1011.800" y="10.700" font-size="9.200" font-weight="bold" text-anchor="middle" fill="#fff" font-family="Liberation Sans, sans-serif">?</text></svg>
<svg class="abs" style="left:925px;top:314px" width="45" height="15" viewBox="925 0 45 15"><g fill="#cfe6e6"><rect x="930.500" y="8.300" width="1.600" height="3.500"/><rect x="933.100" y="6" width="1.600" height="5.800"/><rect x="935.700" y="3.800" width="1.600" height="8"/><rect x="929" y="12.300" width="10.700" height=".8"/></g>
<path d="M953 2.800a5 5 0 1 0 5.500 5.500H953z" fill="#fff"/><path d="M954.300 1.800a5 5 0 0 1 5 5h-5z" fill="#fff"/><path d="M966.300 2.500v11" stroke="#cfe6e6" stroke-width=".7" stroke-dasharray="1 .8"/></svg>
<div class="abs pb" style="left:602px;top:329px;width:417px;height:225px"></div>
<svg class="abs" style="left:603px;top:329px" width="407" height="223" viewBox="603 329 407 223" font-family="Liberation Sans, sans-serif">
<defs>
<radialGradient id="gb0" gradientUnits="userSpaceOnUse" cx="670.4" cy="406.9" r="55.4"><stop offset="0" stop-color="#58b491"/><stop offset=".86" stop-color="#56b390"/><stop offset=".9" stop-color="#44a68d"/><stop offset="1" stop-color="#2f9589"/></radialGradient>
<radialGradient id="gs0" gradientUnits="userSpaceOnUse" cx="670.4" cy="406.9" r="55.4"><stop offset="0" stop-color="#a8d6c7"/><stop offset=".3" stop-color="#80c5ac"/><stop offset=".55" stop-color="#5cb694"/><stop offset=".68" stop-color="#56b390"/><stop offset=".76" stop-color="#46a88d"/><stop offset=".9" stop-color="#39a08b"/><stop offset="1" stop-color="#2f9589"/></radialGradient>
<radialGradient id="gb1" gradientUnits="userSpaceOnUse" cx="806.8" cy="402.4" r="55.4"><stop offset="0" stop-color="#58b491"/><stop offset=".86" stop-color="#56b390"/><stop offset=".9" stop-color="#44a68d"/><stop offset="1" stop-color="#2f9589"/></radialGradient>
<radialGradient id="gs1" gradientUnits="userSpaceOnUse" cx="806.8" cy="402.4" r="55.4"><stop offset="0" stop-color="#a8d6c7"/><stop offset=".3" stop-color="#80c5ac"/><stop offset=".55" stop-color="#5cb694"/><stop offset=".68" stop-color="#56b390"/><stop offset=".76" stop-color="#46a88d"/><stop offset=".9" stop-color="#39a08b"/><stop offset="1" stop-color="#2f9589"/></radialGradient>
<radialGradient id="gb2" gradientUnits="userSpaceOnUse" cx="943" cy="402.4" r="55.4"><stop offset="0" stop-color="#58b491"/><stop offset=".86" stop-color="#56b390"/><stop offset=".9" stop-color="#44a68d"/><stop offset="1" stop-color="#2f9589"/></radialGradient>
<radialGradient id="gs2" gradientUnits="userSpaceOnUse" cx="943" cy="402.4" r="55.4"><stop offset="0" stop-color="#a8d6c7"/><stop offset=".3" stop-color="#80c5ac"/><stop offset=".55" stop-color="#5cb694"/><stop offset=".68" stop-color="#56b390"/><stop offset=".76" stop-color="#46a88d"/><stop offset=".9" stop-color="#39a08b"/><stop offset="1" stop-color="#2f9589"/></radialGradient>
<radialGradient id="gb3" gradientUnits="userSpaceOnUse" cx="670.4" cy="540.1" r="55.4"><stop offset="0" stop-color="#58b491"/><stop offset=".86" stop-color="#56b390"/><stop offset=".9" stop-color="#44a68d"/><stop offset="1" stop-color="#2f9589"/></radialGradient>
<radialGradient id="gs3" gradientUnits="userSpaceOnUse" cx="670.4" cy="540.1" r="55.4"><stop offset="0" stop-color="#a8d6c7"/><stop offset=".3" stop-color="#80c5ac"/><stop offset=".55" stop-color="#5cb694"/><stop offset=".68" stop-color="#56b390"/><stop offset=".76" stop-color="#46a88d"/><stop offset=".9" stop-color="#39a08b"/><stop offset="1" stop-color="#2f9589"/></radialGradient>
<radialGradient id="gb4" gradientUnits="userSpaceOnUse" cx="806.8" cy="539.8" r="55.4"><stop offset="0" stop-color="#58b491"/><stop offset=".86" stop-color="#56b390"/><stop offset=".9" stop-color="#44a68d"/><stop offset="1" stop-color="#2f9589"/></radialGradient>
<radialGradient id="gs4" gradientUnits="userSpaceOnUse" cx="806.8" cy="539.8" r="55.4"><stop offset="0" stop-color="#a8d6c7"/><stop offset=".3" stop-color="#80c5ac"/><stop offset=".55" stop-color="#5cb694"/><stop offset=".68" stop-color="#56b390"/><stop offset=".76" stop-color="#46a88d"/><stop offset=".9" stop-color="#39a08b"/><stop offset="1" stop-color="#2f9589"/></radialGradient>
<radialGradient id="gb5" gradientUnits="userSpaceOnUse" cx="942.7" cy="535" r="55.4"><stop offset="0" stop-color="#58b491"/><stop offset=".86" stop-color="#56b390"/><stop offset=".9" stop-color="#44a68d"/><stop offset="1" stop-color="#2f9589"/></radialGradient>
<radialGradient id="gs5" gradientUnits="userSpaceOnUse" cx="942.7" cy="535" r="55.4"><stop offset="0" stop-color="#a8d6c7"/><stop offset=".3" stop-color="#80c5ac"/><stop offset=".55" stop-color="#5cb694"/><stop offset=".68" stop-color="#56b390"/><stop offset=".76" stop-color="#46a88d"/><stop offset=".9" stop-color="#39a08b"/><stop offset="1" stop-color="#2f9589"/></radialGradient>
</defs>
<text x="670.4" y="340.2" font-family="Liberation Serif, serif" font-size="6.650" fill="#4f4a4a" text-anchor="middle">Set: Community Characteristics, Field: Population</text>
<text x="670.4" y="348.09999999999997" font-family="Liberation Serif, serif" font-size="6.650" fill="#4f4a4a" text-anchor="middle">Density</text>
<text x="806.8" y="340.2" font-family="Liberation Serif, serif" font-size="6.650" fill="#4f4a4a" text-anchor="middle">Set: Community Characteristics, Field: Zip Code</text>
<text x="943" y="340.2" font-family="Liberation Serif, serif" font-size="6.650" fill="#4f4a4a" text-anchor="middle">Set: Community Characteristics, Field: SES</text>
<text x="670.4" y="473.3" font-family="Liberation Serif, serif" font-size="6.650" fill="#4f4a4a" text-anchor="middle">Set: Community Characteristics, Field: Is the sky</text>
<text x="670.4" y="481.2" font-family="Liberation Serif, serif" font-size="6.650" fill="#4f4a4a" text-anchor="middle">blue?</text>
<text x="806.8" y="473.3" font-family="Liberation Serif, serif" font-size="6.650" fill="#4f4a4a" text-anchor="middle">Set: Community Characteristics, Field: Is the sky</text>
<text x="806.8" y="481.2" font-family="Liberation Serif, serif" font-size="6.650" fill="#4f4a4a" text-anchor="middle">clear?</text>
<text x="943" y="472.5" font-family="Liberation Serif, serif" font-size="6.650" fill="#4f4a4a" text-anchor="middle">Set: Participant Demographics, Field: ID</text>
<path d="M670.4 406.9L670.4 351.5A55.4 55.4 0 0 1 725.8 406.9z" fill="url(#gs0)" stroke="#a9d2d6" stroke-width=".8"/>
<path d="M670.4 406.9L725.8 406.9A55.4 55.4 0 0 1 631.2 446.1z" fill="url(#gb0)" stroke="#a9d2d6" stroke-width=".8"/>
<path d="M670.4 406.9L631.2 446.1A55.4 55.4 0 0 1 670.4 351.5z" fill="url(#gb0)" stroke="#a9d2d6" stroke-width=".8"/>
<text x="690.9" y="386.4" font-size="5.400" fill="#45506a" text-anchor="middle" transform="rotate(-52 690.9 386.4)" dy="1.900">Moderate</text>
<text x="681.0" y="433.9" font-size="5.400" fill="#45506a" text-anchor="middle" transform="rotate(75 681.0 433.9)" dy="1.900">High 5 up</text>
<text x="642.6" y="395.7" font-size="5.400" fill="#45506a" text-anchor="middle" transform="rotate(200 642.6 395.7)" dy="1.900">Low 1-2</text>
<path d="M806.8 402.4L862.2 402.4A55.4 55.4 0 0 1 841.4 445.7z" fill="url(#gs1)" stroke="#a9d2d6" stroke-width=".8"/>
<path d="M806.8 402.4L841.4 445.7A55.4 55.4 0 0 1 794.4 456.4z" fill="url(#gs1)" stroke="#a9d2d6" stroke-width=".8"/>
<path d="M806.8 402.4L794.4 456.4A55.4 55.4 0 0 1 756.9 378.4z" fill="url(#gb1)" stroke="#a9d2d6" stroke-width=".8"/>
<path d="M806.8 402.4L756.9 378.4A55.4 55.4 0 0 1 794.4 348.4z" fill="url(#gs1)" stroke="#a9d2d6" stroke-width=".8"/>
<path d="M806.8 402.4L794.4 348.4A55.4 55.4 0 0 1 841.4 359.1z" fill="url(#gs1)" stroke="#a9d2d6" stroke-width=".8"/>
<path d="M806.8 402.4L841.4 359.1A55.4 55.4 0 0 1 862.2 402.4z" fill="url(#gs1)" stroke="#a9d2d6" stroke-width=".8"/>
<text x="832.2" y="414.2" font-size="5.400" fill="#45506a" text-anchor="middle" transform="rotate(25 832.2 414.2)" dy="1.900">02558</text>
<text x="813.5" y="431.6" font-size="5.400" fill="#45506a" text-anchor="middle" transform="rotate(80 813.5 431.6)" dy="1.900">90024</text>
<text x="780.7" y="415.1" font-size="5.400" fill="#45506a" text-anchor="middle" transform="rotate(155 780.7 415.1)" dy="1.900">90016</text>
<text x="789.8" y="381.4" font-size="5.400" fill="#45506a" text-anchor="middle" transform="rotate(235 789.8 381.4)" dy="1.900">90506</text>
<text x="813.5" y="373.2" font-size="5.400" fill="#45506a" text-anchor="middle" transform="rotate(-75 813.5 373.2)" dy="1.900">91436</text>
<text x="830.2" y="391.0" font-size="5.400" fill="#45506a" text-anchor="middle" transform="rotate(-25 830.2 391.0)" dy="1.900">95226</text>
<path d="M943.0 402.4L943.0 347.0A55.4 55.4 0 0 1 998.4 402.4z" fill="url(#gs2)" stroke="#a9d2d6" stroke-width=".8"/>
<path d="M943.0 402.4L998.4 402.4A55.4 55.4 0 0 1 943.0 457.8z" fill="url(#gs2)" stroke="#a9d2d6" stroke-width=".8"/>
<path d="M943.0 402.4L943.0 457.8A55.4 55.4 0 0 1 943.0 347.0z" fill="url(#gb2)" stroke="#a9d2d6" stroke-width=".8"/>
<text x="964.2" y="381.2" font-size="5.400" fill="#45506a" text-anchor="middle" transform="rotate(-50 964.2 381.2)" dy="1.900">Moderate</text>
<text x="960.0" y="419.4" font-size="5.400" fill="#45506a" text-anchor="middle" transform="rotate(45 960.0 419.4)" dy="1.900">High</text>
<text x="921.0" y="402.4" font-size="5.400" fill="#45506a" text-anchor="middle" transform="rotate(180 921.0 402.4)" dy="1.900">Low</text>
<circle cx="670.4" cy="540.1" r="55.4" fill="url(#gb3)"/>
<text x="689.0" y="541.6" font-size="5.400" fill="#45506a" text-anchor="middle">Y</text>
<circle cx="806.8" cy="539.8" r="55.4" fill="url(#gb4)"/>
<text x="825.4" y="541.3" font-size="5.400" fill="#45506a" text-anchor="middle">Y</text>
<circle cx="942.7" cy="535" r="55.4" fill="url(#gb5)"/>
<path d="M942.7 535.0L996.8 523.0A55.4 55.4 0 0 1 997.7 528.7z" fill="#9ccfd6" stroke="#a9d2d6" stroke-width=".8"/>
<path d="M942.7 535.0L997.7 528.7A55.4 55.4 0 0 1 998.1 535.0z" fill="#9ccfd6" stroke="#a9d2d6" stroke-width=".8"/>
<text x="913.7" y="541.5" font-size="5.400" fill="#45506a" text-anchor="middle" transform="rotate(-5 913.7 540)">8 (-10 s)</text>
</svg>
<div class="abs" style="left:1010.8px;top:333.500px;width:8.4px;height:218.500px;background:#c3caca;border:1px solid #9b9494"></div>
<div class="abs" style="left:1010.8px;top:333.500px;width:8.4px;height:35.300px;background:#fbfcfc;border:1px solid #9b9494"></div>
<div class="abs" style="left:1010.8px;top:333.500px;width:8.4px;height:9px;background:#fbfcfc;border:1px solid #9b9494"></div>
<svg class="abs" style="left:1010.8px;top:333.500px" width="8.4" height="9" viewBox="0 0 8.400 9"><path d="M2.400 6.200h3.600L4.200 2.600z" fill="#8a5f5f"/></svg>
<div class="abs" style="left:1010.8px;top:542px;width:8.4px;height:10px;background:#fbfcfc;border:1px solid #9b9494"></div>
<svg class="abs" style="left:1010.8px;top:542px" width="8.4" height="10" viewBox="0 0 8.400 10"><path d="M2.400 3.400h3.600L4.200 7z" fill="#8a5f5f"/></svg>
</div>
</body>
</html>
